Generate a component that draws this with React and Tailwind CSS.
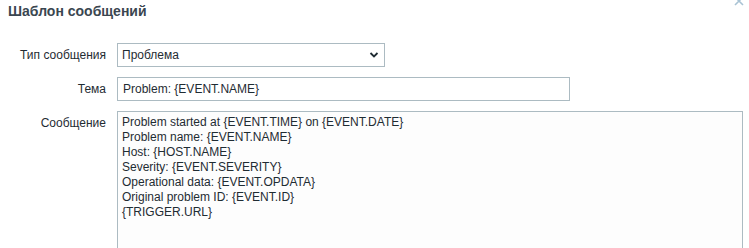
import React from "react";

const lines = [
  "Problem started at {EVENT.TIME} on {EVENT.DATE}",
  "Problem name: {EVENT.NAME}",
  "Host: {HOST.NAME}",
  "Severity: {EVENT.SEVERITY}",
  "Operational data: {EVENT.OPDATA}",
  "Original problem ID: {EVENT.ID}",
  "{TRIGGER.URL}",
];

const App = () => {
  return (
    <div
      className="relative h-[248px] w-[749px] overflow-hidden bg-white text-[12px] text-[#1f2c33]"
      style={{ fontFamily: '"Liberation Sans", Arial, sans-serif' }}>
      {/* header */}
      <div className="flex items-start justify-between pl-[8px] pt-[3px]">
        <h1 className="text-[14px] font-bold leading-[17px] text-[#3a4650]">
          Шаблон сообщений
        </h1>
      </div>
      <button className="absolute right-[4px] top-[-5px] text-[#a9c3d4]">
        <svg width="12" height="12" viewBox="0 0 12 12">
          <path
            d="M2 2 L10 10 M10 2 L2 10"
            stroke="currentColor"
            strokeWidth="1.6"
            fill="none"
          />
        </svg>
      </button>

      {/* form */}
      <div className="mt-[23px] flex flex-col gap-[10px]">
        <div className="flex items-center">
          <label className="w-[107px] pr-[1px] text-right">Тип сообщения</label>
          <div className="ml-[10px] flex h-[24px] w-[268px] items-center justify-between border border-[#acbbc2] bg-white pl-[4px] pr-[5px]">
            <span>Проблема</span>
            <svg width="10" height="8" viewBox="0 0 10 8">
              <path
                d="M1.5 2 L5 5.5 L8.5 2"
                stroke="#1f2c33"
                strokeWidth="1.8"
                fill="none"
              />
            </svg>
          </div>
        </div>

        <div className="flex items-center">
          <label className="w-[107px] pr-[1px] text-right">Тема</label>
          <div className="ml-[10px] flex h-[24px] w-[453px] items-center border border-[#acbbc2] bg-white pl-[5px]">
            Problem: {"{EVENT.NAME}"}
          </div>
        </div>

        <div className="flex items-start">
          <label className="w-[107px] pr-[1px] pt-[5px] text-right leading-[14px]">
            Сообщение
          </label>
          <div className="ml-[10px] h-[170px] w-[626px] border border-[#acbbc2] bg-[#fdfdfd] px-[4px] pt-[3px] leading-[15px]">
            {lines.map((line) => (
              <div key={line}>{line}</div>
            ))}
          </div>
        </div>
      </div>
    </div>
  );
};

export default App;
